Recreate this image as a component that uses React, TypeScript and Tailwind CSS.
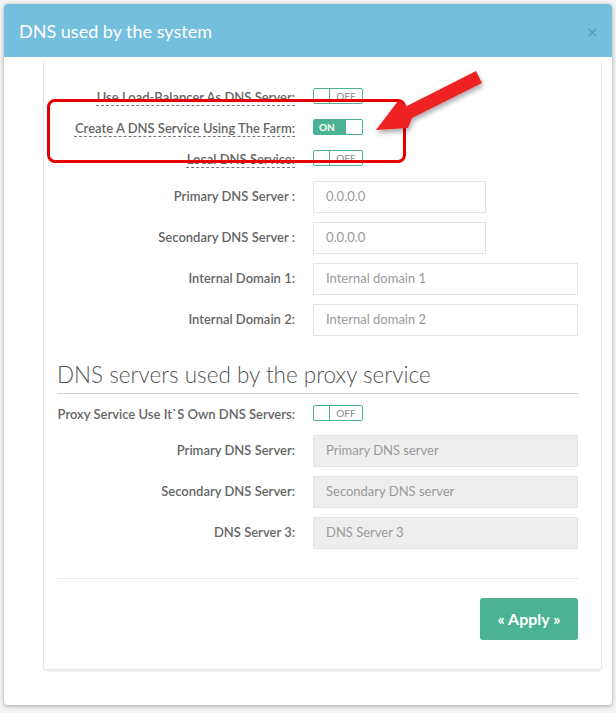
import React from "react";

const font = { fontFamily: "Lato, 'Open Sans', 'Liberation Sans', sans-serif" };

function Toggle({ on }: { on?: boolean }) {
  if (on) {
    return (
      <div className="flex h-[16px] w-[50px] items-stretch rounded-[2px] border border-[#4bb393] bg-[#4bb393]">
        <span className="flex flex-1 items-center pl-[5px] text-[10px] font-bold leading-none text-white">ON</span>
        <span className="w-[16px] rounded-[1px] bg-white" />
      </div>
    );
  }
  return (
    <div className="flex h-[16px] w-[50px] items-stretch rounded-[2px] border border-[#4bb393] bg-white">
      <span className="w-[16px] border-r border-[#4bb393]" />
      <span className="flex flex-1 items-center justify-center text-[10px] leading-none text-[#888]">OFF</span>
    </div>
  );
}

function ToggleRow({ label, on, dashed }: { label: string; on?: boolean; dashed?: boolean }) {
  return (
    <div className="flex h-[31px] items-center">
      <div className="w-[238px] text-right">
        <span
          className={
            "text-[13px] font-semibold text-[#666] " +
            (dashed ? "underline decoration-dashed decoration-[#777] decoration-1 underline-offset-[3px]" : "")
          }
        >
          {label}
        </span>
      </div>
      <div className="ml-[18px]">
        <Toggle on={on} />
      </div>
    </div>
  );
}

function InputRow({
  label,
  placeholder,
  short,
  disabled,
}: {
  label: string;
  placeholder: string;
  short?: boolean;
  disabled?: boolean;
}) {
  return (
    <div className="mb-[9px] flex h-[32px] items-center">
      <div className="w-[238px] text-right text-[13px] font-semibold text-[#666]">{label}</div>
      <div
        className={
          "ml-[18px] flex h-[32px] items-center border px-[12px] text-[13px] text-[#9a9a9a] " +
          (short ? "w-[173px] " : "flex-1 ") +
          (disabled ? "border-[#e3e3e3] bg-[#eeeeee]" : "border-[#e3e3e3] bg-white")
        }
      >
        {placeholder}
      </div>
    </div>
  );
}

export default function App() {
  return (
    <div className="relative h-[713px] w-[616px] overflow-hidden bg-[#f4f4f4] pl-[4px] pt-[4px]" style={font}>
      <div className="h-[701px] w-[608px] rounded-[4px] bg-white shadow-[0_1px_4px_rgba(0,0,0,0.35)]">
        {/* header */}
        <div className="flex h-[53px] items-center justify-between rounded-t-[4px] bg-[#74bede] pl-[15px] pr-[14px]">
          <h4 className="text-[18px] leading-none text-white">DNS used by the system</h4>
          <span className="text-[20px] leading-none text-black/20">×</span>
        </div>

        {/* body */}
        <div className="ml-[39px] mr-[10px] mt-[4px] flex flex-col rounded-b-[3px] border-x border-b border-[#e6e6e6] pb-[29px] pl-[13px] pr-[23px] pt-[19px] shadow-[0_2px_2px_rgba(0,0,0,0.06)]">
          <ToggleRow label="Use Load-Balancer As DNS Server:" dashed />
          <ToggleRow label="Create A DNS Service Using The Farm:" on dashed />
          <ToggleRow label="Local DNS Service:" dashed />

          <div className="mt-[8px]">
            <InputRow label="Primary DNS Server :" placeholder="0.0.0.0" short />
            <InputRow label="Secondary DNS Server :" placeholder="0.0.0.0" short />
            <InputRow label="Internal Domain 1:" placeholder="Internal domain 1" />
            <InputRow label="Internal Domain 2:" placeholder="Internal domain 2" />
          </div>

          <h3 className="mt-[14px] border-b border-[#cfcfcf] pb-[2px] text-[22.5px] font-light leading-[32px] text-[#555]">
            DNS servers used by the proxy service
          </h3>

          <div className="mt-[3px]">
            <ToggleRow label="Proxy Service Use It`S Own DNS Servers:" />
          </div>

          <div className="mt-[7px]">
            <InputRow label="Primary DNS Server:" placeholder="Primary DNS server" disabled />
            <InputRow label="Secondary DNS Server:" placeholder="Secondary DNS server" disabled />
            <InputRow label="DNS Server 3:" placeholder="DNS Server 3" disabled />
          </div>

          <div className="mt-[20px] border-t border-[#e8e8e8] pt-[19px]">
            <div className="flex justify-end">
              <button className="h-[42px] w-[98px] rounded-[3px] bg-[#4bb393] text-[16px] font-bold text-white">
                « Apply »
              </button>
            </div>
          </div>
        </div>
      </div>

      {/* annotation: red highlight box */}
      <div className="pointer-events-none absolute left-[47px] top-[99px] h-[64px] w-[359px] rounded-[8px] border-[3px] border-[#e60000]" />

      {/* annotation: red arrow */}
      <svg className="pointer-events-none absolute left-0 top-0" width="616" height="713">
        <defs>
          <filter id="sh" x="-20%" y="-20%" width="140%" height="140%">
            <feDropShadow dx="1" dy="3" stdDeviation="2.5" floodColor="#000" floodOpacity="0.35" />
          </filter>
        </defs>
        <polygon
          points="476,71 407,106 398,101 376,130 408,128 412,118 482,83"
          fill="#ee2222"
          filter="url(#sh)"
        />
      </svg>
    </div>
  );
}
